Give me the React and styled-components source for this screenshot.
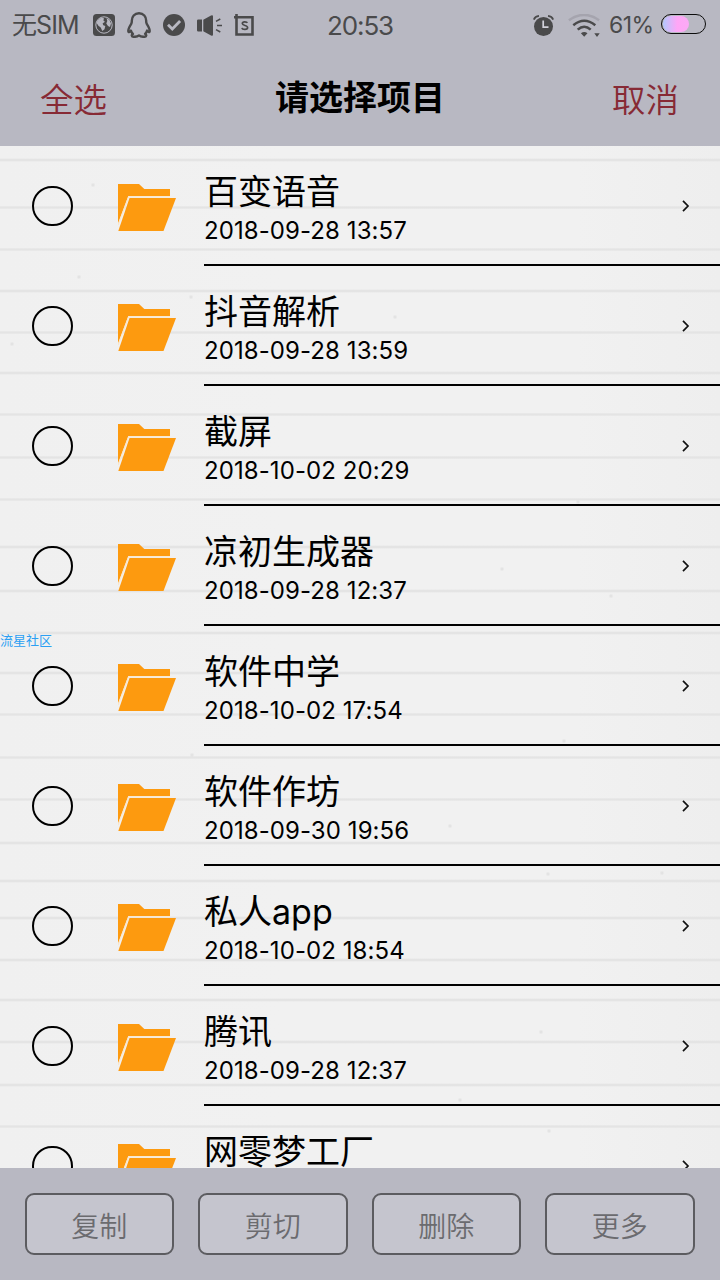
import React from "react";
import styled, { createGlobalStyle } from "styled-components";

const GlobalStyle = createGlobalStyle`
  * {
    box-sizing: border-box;
  }

  body {
    margin: 0;
    background: #b8b8c2;
    font-family: Inter, "Noto Sans CJK SC", sans-serif;
  }
`;

// y offsets of the ruled lines on the notebook paper
const RULES = [
  14, 61.5, 103.5, 145, 186.5, 227, 268.5, 311.5, 353.5, 401, 445, 487, 527,
  568.5, 611.5, 653.5, 697, 735, 772, 814, 854, 896, 939, 980.5,
];

const SPECKS = [
  [93, 39],
  [79, 131],
  [12, 198],
  [191, 151],
  [395, 171],
  [578, 356],
  [502, 423],
  [611, 450],
  [564, 595],
  [450, 680],
  [548, 728],
  [662, 727],
  [541, 886],
  [460, 954],
  [549, 985],
  [192, 609],
];

const ruled = RULES.map(
  (y) =>
    `transparent ${y - 2}px, #e4e4e4 ${y - 0.5}px, #e4e4e4 ${y + 0.5}px, transparent ${y + 2}px`,
).join(", ");

const specks = SPECKS.map(
  ([x, y]) =>
    `radial-gradient(circle at ${x}px ${y}px, #dedede 0, transparent 2.5px)`,
).join(", ");

const Screen = styled.div`
  position: relative;
  width: 720px;
  height: 1280px;
  display: flex;
  flex-direction: column;
  overflow: hidden;
  background: #b8b8c2;
`;

const StatusBar = styled.div`
  height: 50px;
  flex: none;
  display: grid;
  grid-template-columns: 1fr auto 1fr;
  align-items: center;
  padding: 0 14px 2px 12px;
  color: #4a4a4b;
  font-size: 25px;
  line-height: 48px;
  white-space: nowrap;
`;

const StatusGroup = styled.div`
  display: flex;
  align-items: center;
  justify-content: ${(props) => props.$align || "flex-start"};

  svg {
    display: block;
    flex: none;
    margin-left: ${(props) => props.$gap || 0}px;
  }
`;

const Carrier = styled.span`
  width: 67px;
  letter-spacing: -0.9px;
  margin-right: 2px;
`;

const Clock = styled.span`
  font-size: 26px;
  letter-spacing: -1.1px;
  padding: 2px 0 0 2px;
`;

const Percent = styled.span`
  width: 44px;
  margin: 0 8px 0 9px;
  font-size: 23px;
  letter-spacing: -0.5px;
`;

const Battery = styled.span`
  width: 45px;
  height: 20px;
  margin-bottom: 2px;
  padding: 1px;
  border: 1.5px solid #0c0c0c;
  border-radius: 10px;

  &::before {
    content: "";
    display: block;
    width: 26px;
    height: 100%;
    border-radius: 8px;
    background: linear-gradient(90deg, #b3c8ff, #ffa6f6 55%, #fbaaf5);
  }
`;

const Header = styled.header`
  height: 96px;
  flex: none;
  display: flex;
  align-items: center;
  justify-content: space-between;
  padding: 0 41px 0 40px;
`;

const HeaderAction = styled.button`
  padding: 3px 0 0;
  border: 0;
  background: none;
  color: #872a35;
  font-family: inherit;
  font-size: 33.5px;
  font-weight: 350;
  line-height: 50px;
`;

const Title = styled.h1`
  margin: 0;
  padding-left: 1px;
  color: #000;
  font-size: 34px;
  font-weight: 700;
  line-height: 50px;
`;

const FileList = styled.main`
  flex: 1;
  min-height: 0;
  overflow: hidden;
  background:
    ${specks},
    linear-gradient(180deg, ${ruled}),
    linear-gradient(90deg, #f0f0f0, #f1f1f1 40%, #f1f1f1 80%, #eeeeee);
`;

const Row = styled.div`
  height: 120px;
  display: flex;
  padding-left: 32px;
`;

const Radio = styled.span`
  width: 40.5px;
  height: 40.5px;
  flex: none;
  margin: 39.5px 45.5px 0 0;
  border: 2px solid #000;
  border-radius: 50%;
`;

const FolderSvg = styled.svg`
  display: block;
  flex: none;
  margin: 38px 28px 0 0;
`;

const RowBody = styled.div`
  flex: 1;
  display: flex;
  align-items: center;
  justify-content: space-between;
  padding: 2px 30px 0 0;
  border-bottom: 2px solid #000;
  color: #000;
`;

const FileName = styled.div`
  margin: 10px 0 6px;
  font-size: 34px;
  line-height: 34px;
`;

const FileDate = styled.div`
  font-size: 24px;
  line-height: 32px;
  letter-spacing: 0.08px;
`;

const Footer = styled.footer`
  height: 112px;
  flex: none;
  display: flex;
  gap: 24px;
  padding: 25px 25.5px 0 24.5px;
`;

const FooterButton = styled.button`
  flex: 1;
  height: 62px;
  padding: 1px 0 0;
  border: 2px solid #5c5c60;
  border-radius: 9px;
  background: #c5c5ce;
  color: #6b6b6f;
  font-family: inherit;
  font-size: 28px;
  font-weight: 350;
`;

const Watermark = styled.span`
  position: absolute;
  left: 0;
  top: 630px;
  color: #2b9ff3;
  font-size: 13px;
  line-height: 20px;
`;

const GlobeIcon = () => (
  <svg width="22" height="22" viewBox="0 0 22 22">
    <rect width="22" height="22" rx="3.5" fill="#4a4a4b" />
    <circle cx="11" cy="11" r="8.2" fill="none" stroke="#b8b8c2" strokeWidth="1" />
    <path
      d="M4.3 6.5L8 3.7l3 .5-.6 2.2 1.5 1.4-2.3 1.8.7 1.6 2 .8-.8 3.3-2.2 1.8-1.6-3.6-2.3-1.8-1.6-2.4zM13.5 4l3 2 1.5 3.5-1 3.6-2-1-1.7-2.6 1-2.4z"
      fill="#b8b8c2"
    />
  </svg>
);

const PenguinIcon = () => (
  <svg width="24" height="26" viewBox="0 0 24 26">
    <path
      d="M12 1.3c-4.6 0-7.2 3.3-7.2 7.4 0 1.2.1 1.9-.4 2.8C2.8 14.1 1.2 16.6 1.3 19c.1 1.7 1.4 1.2 2.6-.4.4 1.4 1 2.4 2 3.3-1.5.6-1.7 2.6.4 2.8 2.2.3 4.3-.1 5.7-1.3 1.4 1.2 3.5 1.6 5.7 1.3 2.1-.2 1.9-2.2.4-2.8 1-.9 1.6-1.9 2-3.3 1.2 1.6 2.5 2.1 2.6.4.1-2.4-1.5-4.9-3.1-7.5-.5-.9-.4-1.6-.4-2.8 0-4.1-2.6-7.4-7.2-7.4z"
      fill="none"
      stroke="#4a4a4b"
      strokeWidth="2.4"
      strokeLinejoin="round"
    />
  </svg>
);

const CheckIcon = () => (
  <svg width="22" height="22" viewBox="0 0 22 22">
    <circle cx="11" cy="11" r="11" fill="#4a4a4b" />
    <path d="M5 10.8l4.3 4.3 7.8-8" fill="none" stroke="#b8b8c2" strokeWidth="2.8" />
  </svg>
);

const SpeakerIcon = () => (
  <svg width="25" height="21" viewBox="0 0 25 21">
    <path
      d="M1.2 4.5H5v12H1.2Q0 16.5 0 15.3V5.7Q0 4.5 1.2 4.5zM6.3 4.8L14 .5q2-1 2 1v18q0 2-2 1l-7.7-4.3z"
      fill="#4a4a4b"
    />
    <path
      d="M19 6.3l4.3-2.3M20 10.5h5M19 14.7l4.3 2.3"
      stroke="#4a4a4b"
      strokeWidth="1.5"
    />
  </svg>
);

const ScreenshotIcon = () => (
  <svg width="20" height="22" viewBox="0 0 20 22">
    <path
      d="M2.5 0v20.5H18.5V3.3H0"
      fill="none"
      stroke="#4a4a4b"
      strokeWidth="2.6"
    />
    <path
      d="M13.3 8.9C12.8 7.5 8.3 7.2 8.3 9.6c0 2.4 5.3 1.3 5.3 3.9 0 2.5-5.2 2.3-5.6.3"
      fill="none"
      stroke="#4a4a4b"
      strokeWidth="1.7"
    />
  </svg>
);

const AlarmIcon = () => (
  <svg width="21" height="21" viewBox="0 0 21 21">
    <circle cx="10.5" cy="11.5" r="9.5" fill="#4a4a4b" />
    <path
      d="M.8 4.6Q2 1.3 6 .9M20.2 4.6Q19 1.3 15 .9"
      fill="none"
      stroke="#4a4a4b"
      strokeWidth="1.7"
    />
    <path d="M10.2 5.5v6.7h5.3" fill="none" stroke="#d2d1da" strokeWidth="1.7" />
  </svg>
);

const WifiIcon = () => (
  <svg width="32" height="23" viewBox="0 0 32 23">
    <g fill="none" strokeWidth="2.5">
      <path d="M.9 6.2Q16-4.4 31.1 6.2" stroke="#a5a4ae" />
      <path d="M5.3 11.3Q16.2 2.3 27.3 11.3" stroke="#4a4a4b" />
      <path d="M9.7 15.7Q16.2 9.7 22.7 15.7" stroke="#4a4a4b" />
    </g>
    <path
      d="M12.9 19.3Q16.2 16.6 19.5 19.3L16.2 22.7zM26.3 19.3h5.4L29 23z"
      fill="#4a4a4b"
    />
  </svg>
);

const FolderIcon = () => (
  <FolderSvg width="58" height="47" viewBox="0 0 58 47">
    <path d="M0 0H21L26.3 5H52V12H10.3L0 40z" fill="#fd9a0f" />
    <path d="M11.5 14H58L45.5 47H.3z" fill="#fd9a0f" />
    <path d="M0 41L10.7 12.8H52" fill="none" stroke="#fbe6c8" strokeWidth="1.2" />
  </FolderSvg>
);

const ChevronIcon = () => (
  <svg width="8" height="12" viewBox="0 0 8 12">
    <path d="M1 .8l5 5.2-5 5.2" fill="none" stroke="#111" strokeWidth="1.7" />
  </svg>
);

const FILES = [
  { name: "百变语音", date: "2018-09-28 13:57" },
  { name: "抖音解析", date: "2018-09-28 13:59" },
  { name: "截屏", date: "2018-10-02 20:29" },
  { name: "凉初生成器", date: "2018-09-28 12:37" },
  { name: "软件中学", date: "2018-10-02 17:54" },
  { name: "软件作坊", date: "2018-09-30 19:56" },
  { name: "私人app", date: "2018-10-02 18:54" },
  { name: "腾讯", date: "2018-09-28 12:37" },
  { name: "网零梦工厂", date: "" },
];

const ACTIONS = ["复制", "剪切", "删除", "更多"];

export default function App() {
  return (
    <Screen>
      <GlobalStyle />
      <StatusBar>
        <StatusGroup $gap={12}>
          <Carrier>无SIM</Carrier>
          <GlobeIcon />
          <PenguinIcon />
          <CheckIcon />
          <SpeakerIcon />
          <ScreenshotIcon />
        </StatusGroup>
        <Clock>20:53</Clock>
        <StatusGroup $align="flex-end" $gap={14}>
          <AlarmIcon />
          <WifiIcon />
          <Percent>61%</Percent>
          <Battery />
        </StatusGroup>
      </StatusBar>
      <Header>
        <HeaderAction>全选</HeaderAction>
        <Title>请选择项目</Title>
        <HeaderAction>取消</HeaderAction>
      </Header>
      <FileList>
        {FILES.map((file) => (
          <Row key={file.name}>
            <Radio />
            <FolderIcon />
            <RowBody>
              <div>
                <FileName>{file.name}</FileName>
                <FileDate>{file.date || "\u00a0"}</FileDate>
              </div>
              <ChevronIcon />
            </RowBody>
          </Row>
        ))}
      </FileList>
      <Footer>
        {ACTIONS.map((label) => (
          <FooterButton key={label}>{label}</FooterButton>
        ))}
      </Footer>
      <Watermark>流星社区</Watermark>
    </Screen>
  );
}
